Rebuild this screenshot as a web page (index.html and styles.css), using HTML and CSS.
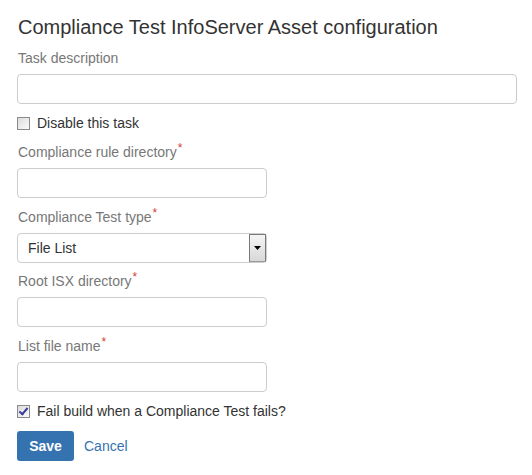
FILE: index.html
```html
<!DOCTYPE html>
<html>
<head>
<meta charset="utf-8">
<link rel="stylesheet" href="styles.css">
</head>
<body>
<form class="config">
  <h3 class="title">Compliance Test InfoServer Asset configuration</h3>
  <div class="group">
    <label class="lbl">Task description</label>
    <input class="field wide" type="text">
  </div>
  <label class="check">
    <input type="checkbox" class="box">
    <span>Disable this task</span>
  </label>
  <div class="group">
    <label class="lbl">Compliance rule directory<span class="req">*</span></label>
    <input class="field" type="text">
  </div>
  <div class="group tight">
    <label class="lbl">Compliance Test type<span class="req">*</span></label>
    <div class="select-wrap">
      <select class="field select"><option>File List</option></select>
      <span class="arrow"><svg width="7" height="4" viewBox="0 0 7 4"><path d="M0 0H7L3.5 4Z" fill="#000"/></svg></span>
    </div>
  </div>
  <div class="group">
    <label class="lbl">Root ISX directory<span class="req">*</span></label>
    <input class="field" type="text">
  </div>
  <div class="group">
    <label class="lbl">List file name<span class="req">*</span></label>
    <input class="field" type="text">
  </div>
  <label class="check">
    <input type="checkbox" class="box" checked>
    <span>Fail build when a Compliance Test fails?</span>
  </label>
  <div class="actions">
    <button type="button" class="btn">Save</button>
    <a class="cancel" href="#">Cancel</a>
  </div>
</form>
</body>
</html>
```
FILE: styles.css
```css
html, body {
  margin: 0;
  padding: 0;
  background: #fff;
}
body {
  font-family: "Liberation Sans", Arial, sans-serif;
  font-size: 14px;
  color: #333;
}
.config {
  padding: 16px 15px 0 17px;
  display: flex;
  flex-direction: column;
}
.title {
  margin: 0 0 10px 1px;
  font-size: 20px;
  line-height: 22px;
  font-weight: normal;
  color: #333;
}
.group {
  display: flex;
  flex-direction: column;
  margin-bottom: 9px;
}
.group.tight {
  margin-bottom: 8px;
}
.lbl {
  display: block;
  color: #777;
  height: 20px;
  line-height: 20px;
  margin: 0 0 6px 1px;
}
.req {
  color: #d04437;
  font-size: 12px;
  line-height: 0;
  vertical-align: 5px;
  margin-left: 1px;
}
.field {
  box-sizing: border-box;
  width: 250px;
  height: 30px;
  border: 1px solid #ccc;
  border-radius: 4px;
  background: #fff;
  font-family: inherit;
  font-size: 14px;
  color: #333;
  padding: 0 10px;
  margin: 0;
}
.field.wide {
  width: 500px;
}
.select-wrap {
  position: relative;
  width: 250px;
}
.select {
  appearance: none;
  -webkit-appearance: none;
  display: block;
  padding-left: 10px;
}
.arrow {
  position: absolute;
  left: 232px;
  top: 1px;
  width: 15px;
  height: 26px;
  border: 1px solid #7a7a7a;
  border-bottom-color: #9a9a9a;
  background: linear-gradient(#f4f4f4, #d8d8d8);
  display: flex;
  align-items: center;
  justify-content: center;
  pointer-events: none;
}
.check {
  display: flex;
  align-items: center;
  height: 20px;
  margin-bottom: 9px;
  color: #333;
}
.box {
  appearance: none;
  -webkit-appearance: none;
  width: 13px;
  height: 13px;
  margin: 0 7px 0 0;
  border: 1px solid #8a8a8a;
  background: linear-gradient(135deg, #dcdcdc, #fafafa);
  box-sizing: border-box;
  position: relative;
}
.box:checked::after {
  content: "";
  position: absolute;
  left: 3px;
  top: 0px;
  width: 3px;
  height: 7px;
  border: solid #3b3b9c;
  border-width: 0 2px 2px 0;
  transform: rotate(40deg);
}
.check span {
  line-height: 20px;
}
.actions {
  display: flex;
  align-items: center;
  margin-top: 1px;
}
.btn {
  width: 57px;
  height: 30px;
  background: #3572b0;
  border: none;
  border-radius: 3px;
  color: #fff;
  font-family: inherit;
  font-size: 14px;
  font-weight: bold;
  padding: 0;
}
.cancel {
  margin-left: 10px;
  color: #3572b0;
  text-decoration: none;
}
```
